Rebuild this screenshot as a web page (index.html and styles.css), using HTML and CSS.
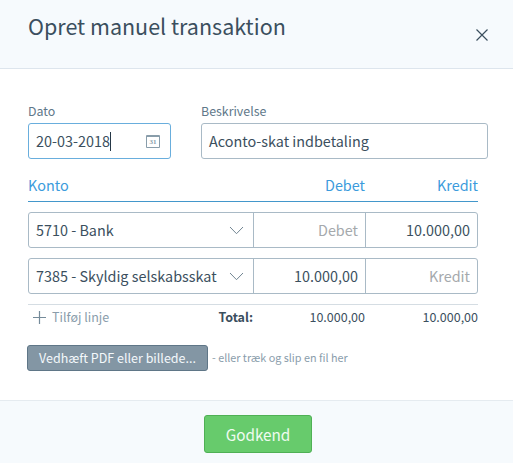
FILE: index.html
```html
<!DOCTYPE html>
<html lang="da">
<head>
<meta charset="utf-8">
<title>Opret manuel transaktion</title>
<link rel="stylesheet" href="styles.css">
</head>
<body>
<div class="dialog">
  <header class="head">
    <h1 class="title">Opret manuel transaktion</h1>
    <svg class="close" width="14" height="14" viewBox="0 0 14 14"><path d="M1.5 1.5L12.5 12.5M12.5 1.5L1.5 12.5"/></svg>
  </header>
  <main class="body">
    <div class="fields">
      <div class="field">
        <span class="label">Dato</span>
        <div class="input focused"><span class="date">20-03-2018</span><span class="caret"></span>
          <svg class="calendar" width="14" height="13" viewBox="0 0 14 13"><path d="M.5 .5H13.5V12.5H.5ZM.5 1.5H13.5"/><text x="7" y="9.2" text-anchor="middle">31</text></svg>
        </div>
      </div>
      <div class="field">
        <span class="label">Beskrivelse</span>
        <div class="input"><span class="desc">Aconto-skat indbetaling</span></div>
      </div>
    </div>
    <div class="columns thead"><span>Konto</span><span class="num">Debet</span><span class="num">Kredit</span></div>
    <div class="columns line">
      <div class="cell account"><span>5710 - Bank</span><svg class="chevron" width="15" height="9" viewBox="0 0 15 9"><path d="M1 1L7.5 7.7L14 1"/></svg></div>
      <div class="cell num placeholder">Debet</div>
      <div class="cell num">10.000,00</div>
    </div>
    <div class="columns line">
      <div class="cell account"><span>7385 - Skyldig selskabsskat</span><svg class="chevron" width="15" height="9" viewBox="0 0 15 9"><path d="M1 1L7.5 7.7L14 1"/></svg></div>
      <div class="cell num">10.000,00</div>
      <div class="cell num placeholder">Kredit</div>
    </div>
    <div class="columns totals">
      <div class="summary"><span class="add"><svg class="plus" width="13" height="13" viewBox="0 0 13 13"><path d="M6.5 0V13M0 6.5H13"/></svg>Tilføj linje</span><b class="total">Total:</b></div>
      <span class="num">10.000,00</span>
      <span class="num">10.000,00</span>
    </div>
    <div class="attach"><button class="upload">Vedhæft PDF eller billede...</button><span class="hint">- eller træk og slip en fil her</span></div>
  </main>
  <footer class="foot"><button class="approve">Godkend</button></footer>
</div>
</body>
</html>
```
FILE: styles.css
```css
* { box-sizing: border-box; }
body {
  margin: 0;
  font-family: "Noto Sans CJK SC", "Open Sans", sans-serif;
  color: #3b4f5e;
  background: #fff;
}
.dialog { width: 513px; height: 463px; display: flex; flex-direction: column; overflow: hidden; }
.head {
  height: 69px;
  display: flex;
  justify-content: space-between;
  padding: 11px 24px 0 28px;
  background: #f6fafd;
  border-bottom: 1px solid #dde5ed;
}
.title { margin: 0; font-size: 21.5px; line-height: 30px; font-weight: 400; white-space: nowrap; }
.close { margin-top: 17px; fill: none; stroke: #3b4f5e; stroke-width: 1.2; }
.body { flex: 1; padding: 34px 25px 0 28px; }
.fields { display: grid; grid-template-columns: 143px 287px; gap: 30px; }
.label { display: block; height: 20px; line-height: 16px; font-size: 12.4px; color: #60788a; }
.input {
  height: 36px;
  display: flex;
  align-items: center;
  padding: 0 10px 0 7px;
  border: 1px solid #a9bac6;
  border-radius: 3px;
  font-size: 14.4px;
  line-height: 34px;
  white-space: nowrap;
}
.focused { border-color: #69aedd; }
.caret { width: 1px; height: 19px; background: #253746; }
.calendar { margin-left: auto; fill: none; stroke: #899daa; }
.calendar text { font: bold 7px "Liberation Serif", serif; fill: #899daa; stroke: none; }
.columns { width: 450px; display: grid; grid-template-columns: 225px 112px 113px; }
.num { text-align: right; }
.thead { height: 32px; margin: 11px 0 10px; border-bottom: 1px solid #4397cb; font-size: 14.4px; line-height: 30px; color: #3b9bdc; }
.line { height: 36px; margin-bottom: 10px; border: 1px solid #a9bac6; border-radius: 3px; grid-template-columns: 224px 112px 112px; font-size: 14.4px; line-height: 34px; }
.cell { padding: 0 7px; white-space: nowrap; }
.cell + .cell { border-left: 1px solid #a9bac6; }
.account { display: flex; justify-content: space-between; align-items: center; padding-right: 9px; }
.placeholder { color: #a5a9ac; }
.chevron { fill: none; stroke: #718592; stroke-width: 1; }
.totals { height: 27px; border-top: 1px solid #d5dde3; font-size: 12.5px; line-height: 24px; }
.totals > * { height: 24px; }
.summary { display: flex; justify-content: space-between; padding-left: 5px; }
.add { display: flex; align-items: center; gap: 6px; color: #8a9dab; }
.plus { stroke: #758b9a; stroke-width: 1.2; }
.attach { display: flex; align-items: center; gap: 4px; margin: 14px 0 0 -1px; }
button { font-family: inherit; padding: 0; border-radius: 3px; white-space: nowrap; }
.upload { width: 181px; height: 26px; background: #8396a4; border: 1px solid #5f7687; color: #f3f8fb; font-size: 12.5px; line-height: 22px; }
.hint { font-size: 10.8px; line-height: 22px; margin-top: -2px; color: #8a9dab; white-space: nowrap; }
.foot { height: 63px; display: flex; justify-content: center; padding: 14px 0 0 3px; background: #f6fafd; border-top: 1px solid #e5ebf0; }
.approve { width: 108px; height: 38px; background: #67cb6c; border: 1px solid #4fb055; color: #effbf0; font-size: 15.3px; line-height: 34px; }
```
